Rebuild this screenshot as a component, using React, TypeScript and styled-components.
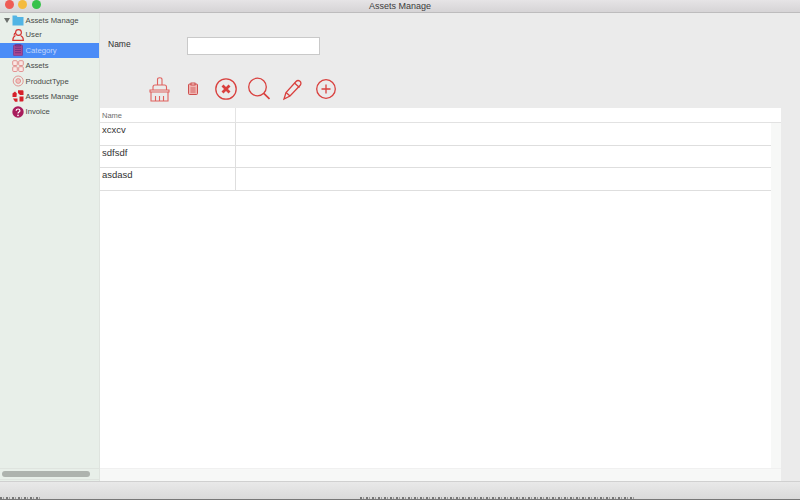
import styled, { createGlobalStyle } from 'styled-components';

const Global = createGlobalStyle`
  html, body { margin: 0; padding: 0; width: 800px; height: 500px; overflow: hidden; }
  body { font-family: "Liberation Sans", Arial, sans-serif; background: #ebebeb; }
`;

const RED = '#d9403e';

const Win = styled.div`
  width: 800px; height: 500px; display: flex; flex-direction: column; overflow: hidden;
  background: #ebebeb;
`;

const TitleBar = styled.div`
  height: 13px; flex: none; box-sizing: border-box; position: relative;
  display: flex; align-items: center; justify-content: center; padding-bottom: 1px;
  background: linear-gradient(#e6e4e6, #d6d4d6);
  border-bottom: 1px solid #bdbcbd;
  font-size: 9px; color: #3c3c3c;
`;

const Lights = styled.div`
  position: absolute; left: 4.5px; top: 0; display: flex; gap: 4.5px;
`;

const Light = styled.span<{ $c: string }>`
  width: 9px; height: 9px; border-radius: 50%; background: ${({ $c }) => $c};
`;

const Main = styled.div`
  flex: 1; display: flex; min-height: 0;
`;

const Sidebar = styled.div`
  width: 99px; flex: none; display: flex; flex-direction: column;
  background: #e8efe9; border-right: 1px solid #dfe4df;
`;

const Tree = styled.div`
  flex: 1; display: flex; flex-direction: column;
`;

const TreeRow = styled.div<{ $active?: boolean; $root?: boolean }>`
  height: ${({ $root }) => ($root ? '14.2px' : '15.4px')};
  display: flex; align-items: center; gap: 1.5px;
  padding-left: ${({ $root }) => ($root ? '4px' : '12px')};
  font-size: 7.7px; color: ${({ $active }) => ($active ? '#c3d7fb' : '#464a47')};
  background: ${({ $active }) => ($active ? '#4a8cf7' : 'transparent')};
`;

const Arrow = styled.span`
  width: 0; height: 0; border-left: 3px solid transparent; border-right: 3px solid transparent;
  border-top: 5px solid #6b6f6c; margin-right: 0.5px;
`;

const RowIcon = styled.svg`
  width: 12px; height: 12px; flex: none;
`;

const SideScroll = styled.div`
  height: 12px; flex: none; box-sizing: border-box; margin-bottom: 1px;
  display: flex; align-items: center; padding: 0 9px 0 2px;
  border-top: 1px solid #dfe4df; border-bottom: 1px solid #dfe4df;
`;

const SideThumb = styled.div`
  flex: 1; height: 6px; border-radius: 3px; background: #aeb3ae;
`;

const Content = styled.div`
  flex: 1; display: flex; flex-direction: column; min-width: 0;
`;

const Form = styled.div`
  height: 47px; flex: none; box-sizing: border-box; display: flex; align-items: center; padding: 18px 0 0 8px;
`;

const FieldLabel = styled.label`
  width: 79px; font-size: 8.5px; color: #2e2e2e; margin-bottom: 4px;
`;

const Input = styled.div`
  width: 133px; height: 18px; box-sizing: border-box; background: #fff; border: 1px solid #c9c9c9;
`;

const Toolbar = styled.div`
  height: 48px; flex: none; box-sizing: border-box; display: flex; align-items: center; padding: 10px 0 0 49px;
`;

const ToolIcon = styled.svg<{ $w: number; $mr: number }>`
  width: ${({ $w }) => $w}px; height: 26px; flex: none; margin-right: ${({ $mr }) => $mr}px;
`;

const TablePanel = styled.div`
  width: 681px; flex: 1; min-height: 0; display: flex; flex-direction: column;
  background: #f7f8f7;
`;

const HeaderRow = styled.div`
  height: 14px; flex: none; display: flex; background: #fff; border-bottom: 1px solid #e2e2e2;
  font-size: 7.5px; color: #6e6e6e;
`;

const HeadCell = styled.div`
  width: 136px; flex: none; box-sizing: border-box; padding-left: 2px; display: flex; align-items: center;
  border-right: 1px solid #e4e4e4;
`;

const Body = styled.div`
  flex: 1; display: flex; flex-direction: column; min-height: 0; width: 671px; background: #fff;
`;

const DataRow = styled.div`
  height: 21.5px; flex: none; display: flex; border-bottom: 1px solid #dedede;
  font-size: 9.5px; color: #333;
`;

const DataCell = styled.div`
  width: 136px; flex: none; box-sizing: border-box; padding: 1px 0 0 2px; border-right: 1px solid #dedede;
`;

const Bottom = styled.div`
  height: 12px; flex: none; background: #f7f8f7; border-top: 1px solid #f0f0f0;
`;

const Status = styled.div`
  height: 19px; flex: none; box-sizing: border-box; display: flex; align-items: flex-end;
  background: linear-gradient(#e9e9e9, #dadada);
  border-top: 1px solid #d0d0d0; border-bottom: 1px solid #777;
`;

const Ticks = styled.div<{ $w: number; $ml: number }>`
  width: ${({ $w }) => $w}px; margin-left: ${({ $ml }) => $ml}px; height: 2px;
  background: repeating-linear-gradient(90deg, #777 0 2px, transparent 2px 3px, #999 3px 4px, transparent 4px 6px);
`;

const items = [
  {
    label: 'User',
    icon: (
      <g fill="none" stroke="#d5302e" strokeWidth="1.1">
        <circle cx="6.500" cy="3.500" r="2.900" />
        <path d="M3.500 6.500C1.500 7.500.8 9 .8 11.400h10.600c0-2.400-.8-3.900-2.800-4.900" />
        <path d="M4 3.500C2.500 4 2 5 2 6.500" />
      </g>
    ),
  },
  {
    label: 'Category',
    active: true,
    icon: (
      <g>
        <rect x="1.500" y="1" width="9" height="10.800" rx="1" fill="#a8478e" stroke="#7b3488" strokeWidth=".7" />
        <path d="M3.500 .6h5v1.400h-5zM3 4.300h6M3 6.500h6M3 8.700h6" stroke="#6a2c80" strokeWidth=".8" fill="none" />
      </g>
    ),
  },
  {
    label: 'Assets',
    icon: (
      <g fill="#fae6e4" stroke="#e08a88" strokeWidth=".9">
        <rect x=".7" y=".7" width="4.600" height="4.800" rx="1" />
        <rect x="6.700" y=".7" width="4.600" height="4.800" rx="1" />
        <rect x=".7" y="6.700" width="4.600" height="4.800" rx="1" />
        <rect x="6.700" y="6.700" width="4.600" height="4.800" rx="1" />
      </g>
    ),
  },
  {
    label: 'ProductType',
    icon: (
      <g fill="none" stroke="#e08a88" strokeWidth=".9">
        <circle cx="6.200" cy="6" r="5" />
        <circle cx="6.200" cy="6" r="2.400" fill="#f2c3c0" />
      </g>
    ),
  },
  {
    label: 'Assets Manage',
    icon: (
      <g fill="#d6202a">
        <path d="M6 .3h4.500a1 1 0 0 1 1 1V5H8L6 3z" />
        <path d="M.5 3.500 3 1.500 4.800 3.500 4.500 7H.5z" />
        <path d="M7.500 6.500h4v4a1 1 0 0 1-1 1H7.500z" />
        <path d="M1 8.500h4.500v3.200H3z" />
      </g>
    ),
  },
  {
    label: 'Invoice',
    icon: (
      <g>
        <circle cx="6" cy="6" r="5.700" fill="#a81c5c" />
        <path d="M4.200 4.700c0-2.300 3.700-2.300 3.700 0 0 1.400-1.900 1.300-1.900 2.800" fill="none" stroke="#fff" strokeWidth="1.200" />
        <circle cx="6" cy="9.400" r=".8" fill="#fff" />
      </g>
    ),
  },
];

const rows = ['xcxcv', 'sdfsdf', 'asdasd'];

export default function App() {
  return (
    <Win>
      <Global />
      <TitleBar>
        <Lights>
          <Light $c="#ee5b55" />
          <Light $c="#f4bb3f" />
          <Light $c="#37c24b" />
        </Lights>
        Assets Manage
      </TitleBar>
      <Main>
        <Sidebar>
          <Tree>
            <TreeRow $root>
              <Arrow />
              <RowIcon viewBox="0 0 12 12">
                <path d="M.5 1.500h4l1 1.500h6v8.500H.5z" fill="#52b4e4" />
              </RowIcon>
              Assets Manage
            </TreeRow>
            {items.map((it) => (
              <TreeRow key={it.label} $active={it.active}>
                <RowIcon viewBox="0 0 12 12">{it.icon}</RowIcon>
                {it.label}
              </TreeRow>
            ))}
          </Tree>
          <SideScroll><SideThumb /></SideScroll>
        </Sidebar>
        <Content>
          <Form>
            <FieldLabel>Name</FieldLabel>
            <Input />
          </Form>
          <Toolbar>
            <ToolIcon $w={21} $mr={18} viewBox="0 0 21 26" fill="none" stroke="#e0625f" strokeWidth="1.100">
              <path d="M8.500 9V3.500c0-2.300 4.500-2.300 4.500 0V9" />
              <path d="M4 14V11c0-1.200.8-2 2-2h9.500c1.200 0 2 .8 2 2v3" />
              <path d="M1 14h19v2H1z" />
              <path d="M2 16v9h17v-9" />
              <path d="M6.500 25v-5M10.500 25v-5M14.500 25v-5" />
            </ToolIcon>
            <ToolIcon $w={10} $mr={17} viewBox="0 0 10 26" fill="none" stroke="#c9413f" strokeWidth=".9">
              <rect x=".5" y="8" width="9" height="10.500" rx="1" fill="#f0b5b2" />
              <rect x="3" y="7" width="4" height="2" fill="#f7d9d7" />
              <path d="M2.500 12h5M2.500 14h5M2.500 16h5" strokeWidth=".7" />
            </ToolIcon>
            <ToolIcon $w={22} $mr={11} viewBox="0 0 22 26" fill="none" stroke={RED} strokeWidth="1.300">
              <circle cx="11" cy="13" r="10.200" />
              <path d="M7.500 9.500l7 7M14.500 9.500l-7 7" strokeWidth="2.800" />
            </ToolIcon>
            <ToolIcon $w={22} $mr={13} viewBox="0 0 22 26" fill="none" stroke={RED} strokeWidth="1.300">
              <circle cx="9.500" cy="11" r="8.800" />
              <path d="M15.800 17.300L21.500 23" strokeWidth="1.700" />
            </ToolIcon>
            <ToolIcon $w={19} $mr={14} viewBox="0 0 19 26" fill="none" stroke={RED} strokeWidth="1.300">
              <path d="M13 5.500c1-1 2.800-1.200 4-.2s1.200 2.800.2 4L7 20l-6 3 2-6.500z" />
              <path d="M11.500 7l5 4.500M3 16.500l4 3.500" />
            </ToolIcon>
            <ToolIcon $w={20} $mr={0} viewBox="0 0 20 26" fill="none" stroke={RED} strokeWidth="1.300">
              <circle cx="10" cy="13" r="9.300" />
              <path d="M10 8.500v9M5.500 13h9" />
            </ToolIcon>
          </Toolbar>
          <TablePanel>
            <HeaderRow><HeadCell>Name</HeadCell></HeaderRow>
            <Body>
              {rows.map((r) => (
                <DataRow key={r}><DataCell>{r}</DataCell></DataRow>
              ))}
            </Body>
            <Bottom />
          </TablePanel>
        </Content>
      </Main>
      <Status>
        <Ticks $w={40} $ml={0} />
        <Ticks $w={275} $ml={320} />
      </Status>
    </Win>
  );
}
